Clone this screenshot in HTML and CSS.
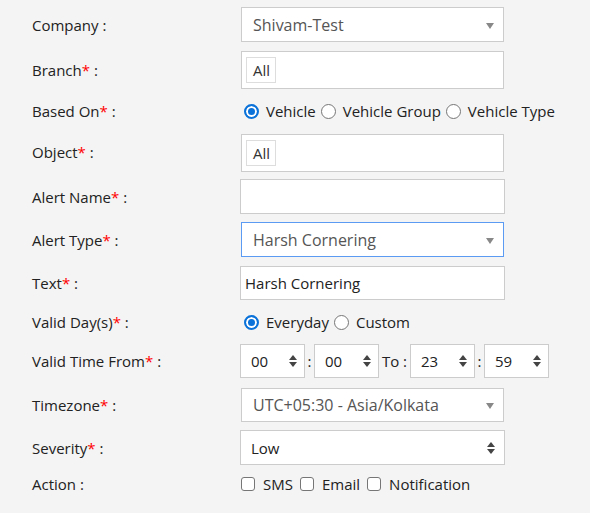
FILE: index.html
```html
<!DOCTYPE html>
<html>
<head>
<meta charset="utf-8">
<link rel="stylesheet" href="styles.css">
</head>
<body>
<div class="form">
  <div class="row r-company">
    <div class="label">Company :</div>
    <div class="ctl sel"><span class="val">Shivam-Test</span><span class="tri"></span></div>
  </div>
  <div class="row r-branch">
    <div class="label">Branch<span class="req">*</span> :</div>
    <div class="ctl multi"><span class="chip">All</span></div>
  </div>
  <div class="row r-based">
    <div class="label">Based On<span class="req">*</span> :</div>
    <div class="choices">
      <span class="opt"><span class="radio on"></span>Vehicle</span>
      <span class="opt"><span class="radio"></span>Vehicle Group</span>
      <span class="opt"><span class="radio"></span>Vehicle Type</span>
    </div>
  </div>
  <div class="row r-object">
    <div class="label">Object<span class="req">*</span> :</div>
    <div class="ctl multi"><span class="chip">All</span></div>
  </div>
  <div class="row r-name">
    <div class="label">Alert Name<span class="req">*</span> :</div>
    <div class="ctl input"></div>
  </div>
  <div class="row r-type">
    <div class="label">Alert Type<span class="req">*</span> :</div>
    <div class="ctl sel focus"><span class="val">Harsh Cornering</span><span class="tri"></span></div>
  </div>
  <div class="row r-text">
    <div class="label">Text<span class="req">*</span> :</div>
    <div class="ctl input text"><span class="val">Harsh Cornering</span></div>
  </div>
  <div class="row r-days">
    <div class="label">Valid Day(s)<span class="req">*</span> :</div>
    <div class="choices">
      <span class="opt"><span class="radio on"></span>Everyday</span>
      <span class="opt"><span class="radio"></span>Custom</span>
    </div>
  </div>
  <div class="row r-time">
    <div class="label">Valid Time From<span class="req">*</span> :</div>
    <div class="times">
      <div class="num"><span class="val">00</span><span class="spin"><i class="up"></i><i class="dn"></i></span></div>
      <span class="colon">:</span>
      <div class="num"><span class="val">00</span><span class="spin"><i class="up"></i><i class="dn"></i></span></div>
      <span class="to">To :</span>
      <div class="num"><span class="val">23</span><span class="spin"><i class="up"></i><i class="dn"></i></span></div>
      <span class="colon">:</span>
      <div class="num"><span class="val">59</span><span class="spin"><i class="up"></i><i class="dn"></i></span></div>
    </div>
  </div>
  <div class="row r-tz">
    <div class="label">Timezone<span class="req">*</span> :</div>
    <div class="ctl sel"><span class="val">UTC+05:30 - Asia/Kolkata</span><span class="tri"></span></div>
  </div>
  <div class="row r-sev">
    <div class="label">Severity<span class="req">*</span> :</div>
    <div class="ctl input native"><span class="val dark">Low</span><span class="spin"><i class="up"></i><i class="dn"></i></span></div>
  </div>
  <div class="row r-action">
    <div class="label">Action :</div>
    <div class="checks">
      <span class="opt"><span class="cb"></span>SMS</span>
      <span class="opt"><span class="cb"></span>Email</span>
      <span class="opt"><span class="cb"></span>Notification</span>
    </div>
  </div>
</div>
</body>
</html>
```
FILE: styles.css
```css
html, body {
  margin: 0;
  padding: 0;
  background: #f4f4f4;
}
body {
  font-family: "Open Sans", "Liberation Sans", sans-serif;
  font-size: 15px;
  color: #222;
}
.form {
  padding: 7px 0 0 32px;
  display: flex;
  flex-direction: column;
}
.row {
  display: grid;
  grid-template-columns: 208px auto;
  align-items: center;
}
.label {
  color: #222;
  line-height: 20px;
}
.req {
  color: #ff0000;
}
.r-company { height: 35px; }
.r-branch { height: 38px; margin-top: 9px; }
.r-based { height: 26px; margin-top: 9px; }
.r-object { height: 38px; margin-top: 10px; }
.r-name { height: 35px; margin-top: 7px; }
.r-type { height: 35px; margin-top: 8px; }
.r-text { height: 34px; margin-top: 9px; }
.r-days { height: 26px; margin-top: 9px; }
.r-time { height: 34px; margin-top: 9px; }
.r-tz { height: 34px; margin-top: 10px; }
.r-sev { height: 35px; margin-top: 8px; }
.r-action { height: 24px; margin-top: 7px; }

.r-object .label { position: relative; top: -1px; }
.r-action .label { position: relative; top: 0; }

.ctl {
  box-sizing: border-box;
  background: #fff;
  border: 1px solid #ccc;
  height: 100%;
  display: flex;
  align-items: center;
  position: relative;
}
.sel, .multi {
  width: 263px;
  margin-left: 1px;
}
.input {
  width: 265px;
}
.sel .val {
  padding-left: 11px;
  color: #555;
  font-size: 16px;
}
.sel.focus {
  border-color: #5b9bf3;
}
.tri {
  position: absolute;
  right: 9px;
  top: 50%;
  margin-top: -2px;
  width: 0;
  height: 0;
  border-left: 4.5px solid transparent;
  border-right: 4.5px solid transparent;
  border-top: 6px solid #888;
}
.multi .chip {
  margin-left: 4px;
  box-sizing: border-box;
  height: 26px;
  border: 1px solid #ddd;
  padding: 0 5px 0 6px;
  line-height: 24px;
  color: #333;
}
.text .val {
  padding-left: 4px;
  color: #222;
}
.native .val {
  padding-left: 10px;
  color: #222;
}
.spin {
  position: absolute;
  right: 9px;
  top: 50%;
  margin-top: -6px;
  display: flex;
  flex-direction: column;
  align-items: center;
  gap: 2px;
}
.spin i {
  display: block;
  width: 0;
  height: 0;
  border-left: 4.5px solid transparent;
  border-right: 4.5px solid transparent;
}
.spin .up { border-bottom: 5px solid #444; }
.spin .dn { border-top: 5px solid #444; }

.choices, .checks {
  display: flex;
  align-items: center;
  margin-left: 4px;
}
.opt {
  display: inline-flex;
  align-items: center;
  color: #222;
  margin-right: 5px;
}
.radio {
  box-sizing: border-box;
  width: 15px;
  height: 15px;
  border-radius: 50%;
  border: 1px solid #767676;
  background: #fff;
  margin-right: 7px;
}
.radio.on {
  border: 2px solid #0b72d9;
  background: #0b72d9;
  box-shadow: inset 0 0 0 2px #fff;
}
.checks {
  margin-left: 1px;
}
.checks .opt {
  margin-right: 7px;
}
.cb {
  box-sizing: border-box;
  width: 14px;
  height: 14px;
  border: 1px solid #767676;
  border-radius: 3px;
  background: #fff;
  margin-right: 8px;
}

.times {
  display: flex;
  align-items: center;
  height: 100%;
}
.num {
  box-sizing: border-box;
  width: 65px;
  height: 100%;
  background: #fff;
  border: 1px solid #ccc;
  display: flex;
  align-items: center;
  position: relative;
}
.num .val {
  padding-left: 10px;
  color: #222;
}
.num .spin {
  right: 7px;
}
.colon {
  width: 9px;
  text-align: center;
}
.to {
  width: 31px;
  text-align: center;
  white-space: nowrap;
}
```
